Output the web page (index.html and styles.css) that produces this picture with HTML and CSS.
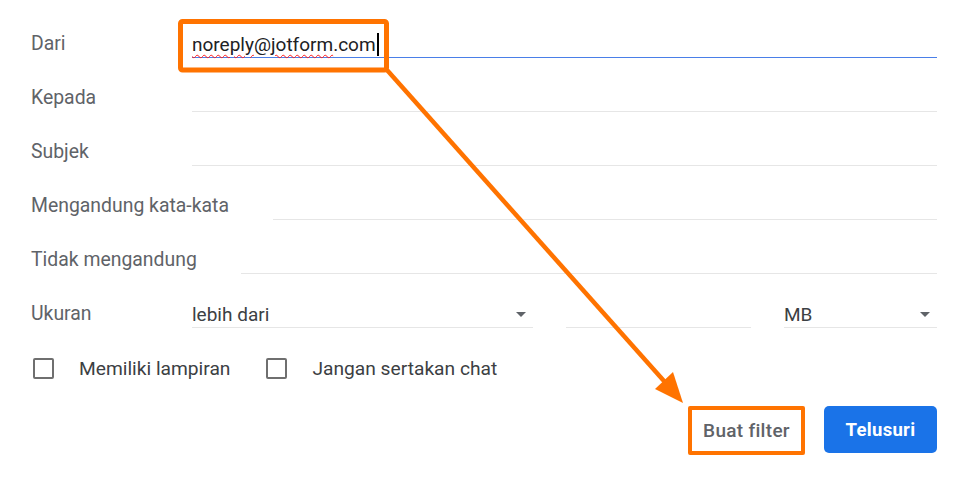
FILE: index.html
```html
<!DOCTYPE html>
<html lang="id">
<head>
<meta charset="utf-8">
<title>Filter</title>
<link rel="stylesheet" href="styles.css">
</head>
<body>
<div class="page">
  <form class="search-form">
    <div class="row">
      <span class="label">Dari</span>
      <div class="field focused">
        <span class="value"><span class="typo">noreply</span>@<span class="typo">jotform</span>.com</span><span class="caret"></span>
      </div>
    </div>
    <div class="row">
      <span class="label">Kepada</span>
      <div class="field"></div>
    </div>
    <div class="row">
      <span class="label">Subjek</span>
      <div class="field"></div>
    </div>
    <div class="row">
      <span class="label">Mengandung kata-kata</span>
      <div class="field"></div>
    </div>
    <div class="row">
      <span class="label">Tidak mengandung</span>
      <div class="field"></div>
    </div>
    <div class="row">
      <span class="label">Ukuran</span>
      <div class="size-fields">
        <div class="field select select-op"><span class="value">lebih dari</span><span class="arrow"></span></div>
        <div class="field size-num"></div>
        <div class="field select select-unit"><span class="value">MB</span><span class="arrow"></span></div>
      </div>
    </div>
    <div class="checks">
      <label class="check"><span class="box"></span><span class="check-text">Memiliki lampiran</span></label>
      <label class="check"><span class="box"></span><span class="check-text">Jangan sertakan chat</span></label>
    </div>
    <div class="actions">
      <button type="button" class="btn-text">Buat filter</button>
      <button type="button" class="btn-primary">Telusuri</button>
    </div>
  </form>
  <svg class="annot" width="968" height="480" viewBox="0 0 968 480">
    <rect x="180.5" y="21.5" width="206" height="48.5" rx="2" fill="none" stroke="#ff7300" stroke-width="5"/>
    <line x1="387" y1="70" x2="672" y2="390" stroke="#ff7300" stroke-width="4.5"/>
    <polygon points="683,403 655,389 673,372" fill="#ff7300"/>
  </svg>
</div>
</body>
</html>
```

FILE: styles.css
```css
html, body {
  margin: 0;
  padding: 0;
  background: #ffffff;
}

.page {
  position: relative;
  width: 968px;
  height: 480px;
  overflow: hidden;
  font-family: Roboto, "Liberation Sans", Arial, sans-serif;
}

.search-form {
  padding: 4px 31px 0 31px;
  display: flex;
  flex-direction: column;
}

.row {
  display: flex;
  align-items: flex-end;
  height: 54px;
}

.label {
  min-width: 117px;
  margin-right: 44px;
  font-size: 19.4px;
  line-height: 26px;
  padding-bottom: 1px;
  color: #5f6368;
  white-space: nowrap;
}

.field {
  flex: 1;
  height: 26px;
  border-bottom: 1px solid #e6e6e6;
  display: flex;
  align-items: center;
  font-size: 19px;
  color: #202124;
}

.field.focused {
  border-bottom-color: #4a7fe8;
}

.select {
  justify-content: space-between;
  color: #3c4043;
}

.value {
  white-space: nowrap;
}

.typo {
  text-decoration: underline wavy #ff1a1a;
  text-decoration-thickness: 1.3px;
  text-underline-offset: 3px;
}

.caret {
  display: inline-block;
  width: 2px;
  height: 23px;
  background: #000;
  margin-left: 1px;
}

.size-fields {
  flex: 1;
  display: flex;
  gap: 33px;
}

.select-op {
  flex: 0 0 341px;
}

.size-num {
  flex: 0 0 185px;
}

.select-unit {
  flex: 1;
}

.arrow {
  width: 0;
  height: 0;
  border-left: 5px solid transparent;
  border-right: 5px solid transparent;
  border-top: 5px solid #5f6368;
  margin-right: 7px;
}

.check-text {
  white-space: nowrap;
}

.checks {
  display: flex;
  align-items: center;
  height: 28px;
  margin-top: 26px;
  gap: 34px;
}

.check {
  display: flex;
  align-items: center;
  gap: 25px;
  font-size: 19.2px;
  color: #3c4043;
}

.box {
  width: 17px;
  height: 17px;
  border: 2.5px solid #6f6f6f;
  border-radius: 2px;
  margin-left: 2px;
}

.actions {
  display: flex;
  justify-content: flex-end;
  align-items: flex-start;
  gap: 19px;
  margin-top: 24px;
}

.btn-text {
  width: 117px;
  height: 49px;
  box-sizing: border-box;
  border: 4px solid #ff7300;
  border-radius: 2px;
  background: #fff;
  font-family: Roboto, "Liberation Sans", Arial, sans-serif;
  font-weight: 500;
  font-size: 19px;
  letter-spacing: 0.3px;
  color: #5f6368;
  padding: 0;
}

.btn-primary {
  width: 113px;
  height: 47px;
  border: none;
  border-radius: 5px;
  background: #1a73e8;
  color: #fff;
  font-family: Roboto, "Liberation Sans", Arial, sans-serif;
  font-weight: 700;
  font-size: 18.5px;
  letter-spacing: 0.3px;
  padding: 0;
}

.annot {
  position: absolute;
  top: 0;
  left: 0;
  pointer-events: none;
}
```
